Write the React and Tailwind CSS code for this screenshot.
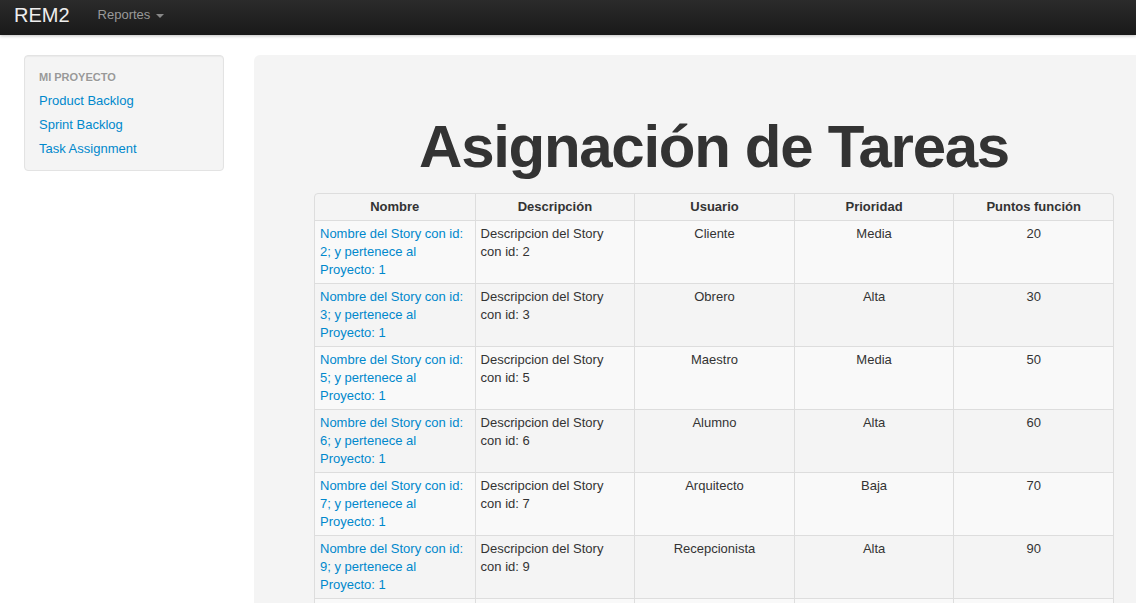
const ROWS = [
  { id: 2, usuario: "Cliente", prioridad: "Media", puntos: 20 },
  { id: 3, usuario: "Obrero", prioridad: "Alta", puntos: 30 },
  { id: 5, usuario: "Maestro", prioridad: "Media", puntos: 50 },
  { id: 6, usuario: "Alumno", prioridad: "Alta", puntos: 60 },
  { id: 7, usuario: "Arquitecto", prioridad: "Baja", puntos: 70 },
  { id: 9, usuario: "Recepcionista", prioridad: "Alta", puntos: 90 },
  { id: 10, usuario: "Secretaria", prioridad: "Baja", puntos: 100 },
];

const HEADERS = ["Nombre", "Descripción", "Usuario", "Prioridad", "Puntos función"];

export default function App() {
  return (
    <div
      className="h-[603px] w-[1136px] overflow-hidden bg-white text-[13px] leading-[18px] text-[#333]"
      style={{ fontFamily: '"Liberation Sans", Arial, sans-serif' }}
    >
      {/* Navbar */}
      <div className="relative z-10 flex h-[35px] items-center bg-gradient-to-b from-[#2b2b2b] to-[#191919] pb-[5px] shadow-[0_1px_3px_rgba(0,0,0,0.25)]">
        <a className="ml-[14px] text-[20px] font-light leading-[20px] text-[#eee]">REM2</a>
        <a className="ml-[28px] flex items-center gap-[6px] text-[13px] text-[#999]">
          Reportes
          <span className="mt-[1px] h-0 w-0 border-x-[4px] border-t-[4px] border-x-transparent border-t-[#888]" />
        </a>
      </div>

      <div className="flex items-start gap-[30px] pl-[24px] pt-[20px]">
        {/* Sidebar */}
        <div className="w-[200px] shrink-0 rounded border border-[#e3e3e3] bg-[#f4f4f4] pb-[9px] pt-[11px] shadow-[inset_0_1px_1px_rgba(0,0,0,0.04)]">
          <div className="mb-[2px] px-[14px] text-[11px] font-bold uppercase leading-[20px] text-[#999] [text-shadow:0_1px_0_rgba(255,255,255,0.5)]">
            Mi Proyecto
          </div>
          {["Product Backlog", "Sprint Backlog", "Task Assignment"].map((l) => (
            <a key={l} className="block px-[14px] py-[3px] text-[13px] leading-[18px] text-[#0088cc]">
              {l}
            </a>
          ))}
        </div>

        {/* Hero */}
        <div className="w-[920px] shrink-0 rounded-md bg-[#f4f4f4] px-[60px] pt-[62px] pb-[60px]">
          <h1 className="mb-[16px] text-center text-[60px] font-bold leading-[60px] tracking-[-1.3px] text-[#333]">
            Asignación de Tareas
          </h1>
          <table className="w-[800px] table-fixed border-separate border-spacing-0 rounded border border-[#ddd]">
            <thead>
              <tr>
                {HEADERS.map((h, i) => (
                  <th
                    key={h}
                    className={`px-[5px] py-[4px] text-center text-[13px] font-bold leading-[18px] ${
                      i > 0 ? "border-l border-[#ddd]" : ""
                    }`}
                  >
                    {h}
                  </th>
                ))}
              </tr>
            </thead>
            <tbody>
              {ROWS.map((r, idx) => (
                <tr key={r.id} className={idx % 2 === 0 ? "bg-[#f9f9f9]" : ""}>
                  <td className="border-t border-[#ddd] px-[5px] py-[4px] align-top">
                    <a className="text-[#0088cc]">
                      Nombre del Story con id: {r.id}; y pertenece al Proyecto: 1
                    </a>
                  </td>
                  <td className="border-l border-t border-[#ddd] px-[5px] py-[4px] align-top">
                    <div className="max-w-[140px]">Descripcion del Story con id: {r.id}</div>
                  </td>
                  <td className="border-l border-t border-[#ddd] px-[5px] py-[4px] text-center align-top">
                    {r.usuario}
                  </td>
                  <td className="border-l border-t border-[#ddd] px-[5px] py-[4px] text-center align-top">
                    {r.prioridad}
                  </td>
                  <td className="border-l border-t border-[#ddd] px-[5px] py-[4px] text-center align-top">
                    {r.puntos}
                  </td>
                </tr>
              ))}
            </tbody>
          </table>
        </div>
      </div>
    </div>
  );
}
